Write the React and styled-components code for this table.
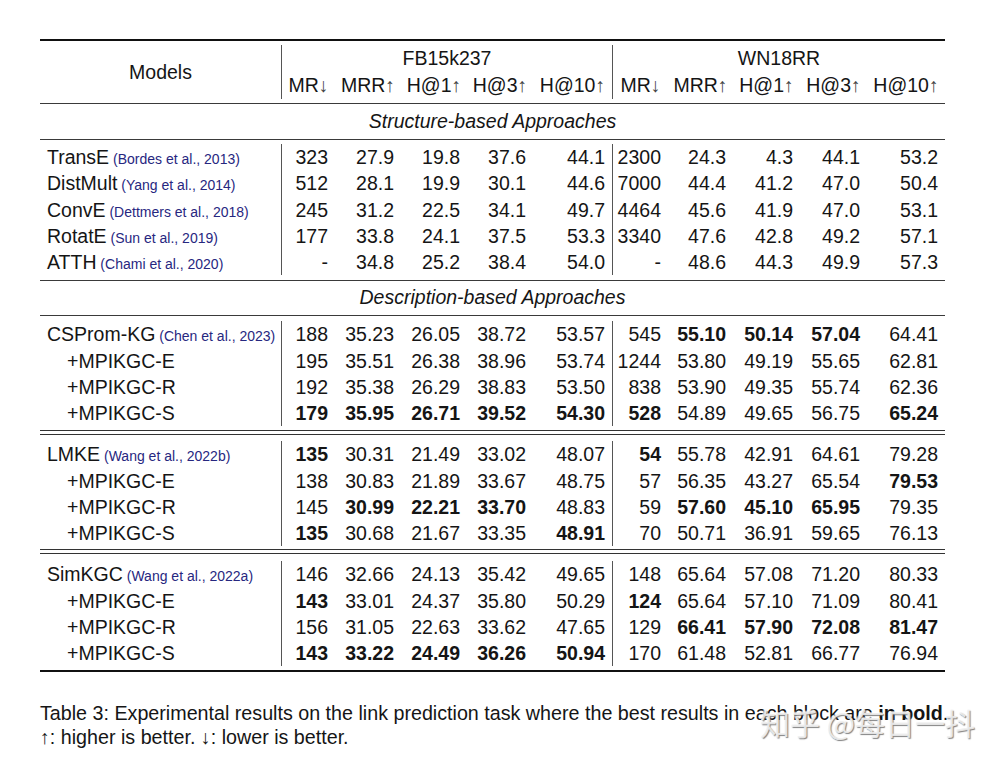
import React from "react";
import styled, { createGlobalStyle } from "styled-components";

const GlobalStyle = createGlobalStyle`
  html, body { margin: 0; padding: 0; background: #ffffff; }
  body { font-family: "Liberation Sans", Arial, sans-serif; color: #151515; }
`;

const Page = styled.div`
  position: relative;
  width: 1003px;
  height: 765px;
  box-sizing: border-box;
  padding: 39px 0 0 40px;
  overflow: hidden;
`;

const Table = styled.table`
  width: 905px;
  table-layout: fixed;
  border-collapse: separate;
  border-spacing: 0;
  font-size: 19.5px;
  color: #151515;
`;

const RuleCell = styled.td`
  padding: ${(p) => p.$pt}px 0 ${(p) => p.$pb}px 0;
  line-height: 0;
  font-size: 0;
`;

const Line = styled.div`
  height: ${(p) => p.$h}px;
  background: ${(p) => p.$c};
`;

const DoubleLine = styled.div`
  height: 3px;
  border-top: 1px solid #333;
  border-bottom: 1px solid #333;
`;

const HeadRow = styled.tr`
  height: 27px;
`;

const ModelsHead = styled.th`
  font-weight: normal;
  text-align: center;
  vertical-align: middle;
  padding: 0;
`;

const GroupHead = styled.th`
  font-weight: normal;
  text-align: center;
  padding: 0;
  height: 27px;
  border-left: ${(p) => (p.$vline ? "1px solid #555" : "none")};
  line-height: 27px;
`;

const SubHead = styled.th`
  font-weight: normal;
  text-align: center;
  padding: 0;
  height: 27px;
  white-space: nowrap;
  border-left: ${(p) => (p.$vline ? "1px solid #555" : "none")};
  line-height: 27px;
`;

const Arrow = styled.span`
  color: #444;
  line-height: 1;
`;

const SectionRow = styled.tr`
  height: 26px;
`;

const SectionCell = styled.td`
  text-align: center;
  font-style: italic;
  padding: 0;
  height: 26px;
  line-height: 26px;
`;

const DataRow = styled.tr`
  height: 26.25px;
`;

const ModelCell = styled.td`
  padding: 0 0 0 ${(p) => (p.$indent ? 27 : 7)}px;
  white-space: nowrap;
  height: 26.25px;
  line-height: 26px;
`;

const Cite = styled.span`
  font-size: 14px;
  line-height: 1;
  color: #27277f;
`;

const NumCell = styled.td`
  text-align: right;
  padding: 0 7px 0 0;
  white-space: nowrap;
  height: 26.25px;
  line-height: 26px;
  font-weight: ${(p) => (p.$bold ? "bold" : "normal")};
  border-left: ${(p) => (p.$vline ? "1px solid #555" : "none")};
`;

const Caption = styled.div`
  margin-top: 29px;
  width: 930px;
  font-size: 19.7px;
  line-height: 24px;
  color: #151515;
  white-space: nowrap;
`;

const Watermark = styled.div`
  position: absolute;
  left: 760px;
  top: 702px;
  font-family: "Noto Sans CJK SC", sans-serif;
  font-size: 30px;
  line-height: 40px;
  color: rgba(240, 240, 240, 0.9);
  text-shadow: 1px 1px 1px rgba(100, 100, 100, 0.8), -1px -1px 0 rgba(255, 255, 255, 0.6);
  white-space: nowrap;
`;

const COLS = [241, 54, 66, 66, 66, 79, 56, 65, 67, 67, 78];
const METRICS = ["MR", "MRR", "H@1", "H@3", "H@10"];
const ARROWS = ["↓", "↑", "↑", "↑", "↑"];

const structure = [
  ["TransE", "Bordes et al., 2013", ["323", "27.9", "19.8", "37.6", "44.1", "2300", "24.3", "4.3", "44.1", "53.2"]],
  ["DistMult", "Yang et al., 2014", ["512", "28.1", "19.9", "30.1", "44.6", "7000", "44.4", "41.2", "47.0", "50.4"]],
  ["ConvE", "Dettmers et al., 2018", ["245", "31.2", "22.5", "34.1", "49.7", "4464", "45.6", "41.9", "47.0", "53.1"]],
  ["RotatE", "Sun et al., 2019", ["177", "33.8", "24.1", "37.5", "53.3", "3340", "47.6", "42.8", "49.2", "57.1"]],
  ["ATTH", "Chami et al., 2020", ["-", "34.8", "25.2", "38.4", "54.0", "-", "48.6", "44.3", "49.9", "57.3"]],
];

// "*" prefix marks bold
const blocks = [
  [
    ["CSProm-KG", "Chen et al., 2023", ["188", "35.23", "26.05", "38.72", "53.57", "545", "*55.10", "*50.14", "*57.04", "64.41"]],
    ["+MPIKGC-E", null, ["195", "35.51", "26.38", "38.96", "53.74", "1244", "53.80", "49.19", "55.65", "62.81"]],
    ["+MPIKGC-R", null, ["192", "35.38", "26.29", "38.83", "53.50", "838", "53.90", "49.35", "55.74", "62.36"]],
    ["+MPIKGC-S", null, ["*179", "*35.95", "*26.71", "*39.52", "*54.30", "*528", "54.89", "49.65", "56.75", "*65.24"]],
  ],
  [
    ["LMKE", "Wang et al., 2022b", ["*135", "30.31", "21.49", "33.02", "48.07", "*54", "55.78", "42.91", "64.61", "79.28"]],
    ["+MPIKGC-E", null, ["138", "30.83", "21.89", "33.67", "48.75", "57", "56.35", "43.27", "65.54", "*79.53"]],
    ["+MPIKGC-R", null, ["145", "*30.99", "*22.21", "*33.70", "48.83", "59", "*57.60", "*45.10", "*65.95", "79.35"]],
    ["+MPIKGC-S", null, ["*135", "30.68", "21.67", "33.35", "*48.91", "70", "50.71", "36.91", "59.65", "76.13"]],
  ],
  [
    ["SimKGC", "Wang et al., 2022a", ["146", "32.66", "24.13", "35.42", "49.65", "148", "65.64", "57.08", "71.20", "80.33"]],
    ["+MPIKGC-E", null, ["*143", "33.01", "24.37", "35.80", "50.29", "*124", "65.64", "57.10", "71.09", "80.41"]],
    ["+MPIKGC-R", null, ["156", "31.05", "22.63", "33.62", "47.65", "129", "*66.41", "*57.90", "*72.08", "*81.47"]],
    ["+MPIKGC-S", null, ["*143", "*33.22", "*24.49", "*36.26", "*50.94", "170", "61.48", "52.81", "66.77", "76.94"]],
  ],
];

function Rule({ pt, pb, h = 1, c = "#3a3a3a", double = false }) {
  return (
    <tr>
      <RuleCell colSpan={11} $pt={pt} $pb={pb}>
        {double ? <DoubleLine /> : <Line $h={h} $c={c} />}
      </RuleCell>
    </tr>
  );
}

function Row({ name, cite, values }) {
  const indent = name.startsWith("+");
  return (
    <DataRow>
      <ModelCell $indent={indent}>
        {name}
        {cite && <Cite> ({cite})</Cite>}
      </ModelCell>
      {values.map((v, i) => {
        const bold = v.startsWith("*");
        return (
          <NumCell key={i} $bold={bold} $vline={i === 0 || i === 5}>
            {bold ? v.slice(1) : v}
          </NumCell>
        );
      })}
    </DataRow>
  );
}

export default function App() {
  return (
    <>
      <GlobalStyle />
      <Page>
        <Table>
          <colgroup>
            {COLS.map((w, i) => (
              <col key={i} style={{ width: w }} />
            ))}
          </colgroup>
          <tbody>
            <Rule pt={0} pb={4} h={2} c="#111" />
            <HeadRow>
              <ModelsHead rowSpan={2}>Models</ModelsHead>
              <GroupHead colSpan={5} $vline>FB15k237</GroupHead>
              <GroupHead colSpan={5} $vline>WN18RR</GroupHead>
            </HeadRow>
            <HeadRow>
              {[0, 1].map((g) =>
                METRICS.map((m, i) => (
                  <SubHead key={`${g}-${i}`} $vline={i === 0}>
                    {m}
                    <Arrow>{ARROWS[i]}</Arrow>
                  </SubHead>
                ))
              )}
            </HeadRow>
            <Rule pt={4} pb={4} />
            <SectionRow>
              <SectionCell colSpan={11}>Structure-based Approaches</SectionCell>
            </SectionRow>
            <Rule pt={5} pb={4} />
            {structure.map(([n, c, v]) => (
              <Row key={n} name={n} cite={c} values={v} />
            ))}
            <Rule pt={5} pb={3} />
            <SectionRow>
              <SectionCell colSpan={11}>Description-based Approaches</SectionCell>
            </SectionRow>
            <Rule pt={5} pb={5} />
            {blocks[0].map(([n, c, v], i) => (
              <Row key={`a${i}`} name={n} cite={c} values={v} />
            ))}
            <Rule pt={4} pb={6} double />
            {blocks[1].map(([n, c, v], i) => (
              <Row key={`b${i}`} name={n} cite={c} values={v} />
            ))}
            <Rule pt={3} pb={7} double />
            {blocks[2].map(([n, c, v], i) => (
              <Row key={`c${i}`} name={n} cite={c} values={v} />
            ))}
            <Rule pt={4} pb={0} h={2} c="#111" />
          </tbody>
        </Table>
        <Caption>
          Table 3: Experimental results on the link prediction task where the best results in each block are <b>in bold</b>.
          <br />
          ↑: higher is better. ↓: lower is better.
        </Caption>
        <Watermark>知乎 @每日一抖</Watermark>
      </Page>
    </>
  );
}
